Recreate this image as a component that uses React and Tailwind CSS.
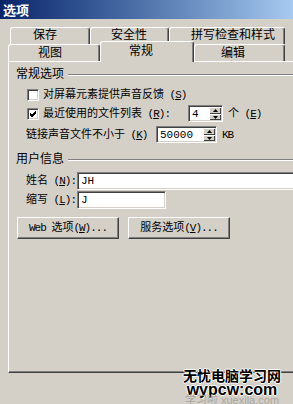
import React from 'react';

const Tab = ({ children, className }) => (
  <div
    className={`flex items-center border-t border-l border-r border-t-white border-l-white border-r-[#404040] rounded-tl-[3px] rounded-tr-[3px] shadow-[inset_-1px_0_0_#808080] bg-[#d4d0c8] ${className}`}
  >
    {children}
  </div>
);

const Header = ({ children, className }) => (
  <div className={`flex items-center h-[12px] pl-[7px] text-[12px] leading-[12px] ${className}`}>
    <span>{children}</span>
    <div className="flex-1 ml-[4px] h-[2px] border-t border-t-[#808080] border-b border-b-white" />
  </div>
);

// latin bits are narrower in the original (bitmap font), tighten them
const Lat = ({ children }) => <span className="tracking-[-1px]">{children}</span>;

const Checkbox = ({ checked }) => (
  <div className="w-[12px] h-[12px] shrink-0 bg-white border border-t-[#808080] border-l-[#808080] border-r-white border-b-white shadow-[inset_1px_1px_0_#404040,inset_-1px_-1px_0_#d4d0c8] flex items-center justify-center">
    {checked && (
      <svg width="8" height="8" viewBox="0 0 8 8">
        <path d="M1 3 L3 5 L7 1 M1 4 L3 6 L7 2 M1 5 L3 7 L7 3" stroke="#000" strokeWidth="1" fill="none" />
      </svg>
    )}
  </div>
);

const Sunken = ({ className, children }) => (
  <div
    className={`h-full bg-white border border-t-[#808080] border-l-[#808080] border-r-white border-b-white shadow-[inset_1px_1px_0_#404040,inset_-1px_-1px_0_#d4d0c8] flex items-center ${className}`}
  >
    {children}
  </div>
);

const Arrow = ({ up }) => (
  <div className="flex-1 flex items-center justify-center bg-[#d4d0c8] border-t border-l border-t-white border-l-white shadow-[inset_-1px_-1px_0_#404040]">
    <svg width="5" height="3" viewBox="0 0 5 3">
      <path d={up ? 'M2.5 0 L5 3 L0 3 Z' : 'M0 0 L5 0 L2.5 3 Z'} fill="#000" />
    </svg>
  </div>
);

const Spin = ({ value, className }) => (
  <Sunken className={`justify-between shrink-0 ${className}`}>
    <span className="pl-[3px]">{value}</span>
    <div className="flex flex-col w-[13px] h-full py-[1px] pr-[1px]">
      <Arrow up />
      <Arrow />
    </div>
  </Sunken>
);

const Button = ({ children }) => (
  <div className="w-[102px] h-[22px] flex items-center justify-center whitespace-nowrap border-t border-l border-r border-b border-t-white border-l-white border-r-[#404040] border-b-[#404040] shadow-[inset_-1px_-1px_0_#808080]">
    <span>{children}</span>
  </div>
);

export default function App() {
  return (
    <div className="relative w-[293px] h-[404px] overflow-hidden bg-[#d4d0c8] text-black text-[11px] leading-[12px] whitespace-nowrap font-['Liberation_Mono','Noto_Sans_CJK_SC',monospace]">
      {/* title bar */}
      <div className="h-[19px] flex items-center pl-[3px] bg-linear-to-r from-[#0a246a] to-[#a6caf0]">
        <span className="text-white font-bold text-[13px] leading-[13px] font-['Noto_Sans_CJK_SC',sans-serif]">选项</span>
      </div>

      {/* tabs */}
      <div className="flex pt-[8px] pl-[10px] text-[12px]">
        <Tab className="w-[80px] h-[17px] pl-[22px]">保存</Tab>
        <Tab className="w-[79px] h-[17px] pl-[20px]">安全性</Tab>
        <Tab className="w-[116px] h-[17px] pl-[21px]">拼写检查和样式</Tab>
      </div>
      <div className="flex items-end h-[17px] pl-[8px] text-[12px] relative z-10">
        <Tab className="w-[92px] h-[17px] pl-[29px] pt-[2px]">视图</Tab>
        <Tab className="w-[94px] h-[21px] -mb-px pl-[28px]">常规</Tab>
        <Tab className="w-[91px] h-[17px] pl-[26px] pt-[2px]">编辑</Tab>
      </div>

      {/* panel */}
      <div className="ml-[8px] w-[300px] h-[312px] border-l border-t border-b border-l-white border-t-white border-b-[#404040] shadow-[inset_0_-1px_0_#808080]">
        <Header className="mt-[7px]">常规选项</Header>

        <div className="flex items-center mt-[5px] h-[17px] pl-[18px]">
          <Checkbox />
          <span className="ml-[4px]">对屏幕元素提供声音反馈<Lat> (<u>S</u>)</Lat></span>
        </div>

        <div className="flex items-center mt-[2px] h-[17px] pl-[18px]">
          <Checkbox checked />
          <span className="ml-[4px] w-[145px] shrink-0">最近使用的文件列表<Lat> (<u>R</u>):</Lat></span>
          <Spin value="4" className="w-[35px]" />
          <span className="ml-[5px]">个<Lat> (<u>E</u>)</Lat></span>
        </div>

        <div className="flex items-center mt-[4px] h-[17px] pl-[17px]">
          <span className="w-[130px] shrink-0">链接声音文件不小于<Lat> (<u>K</u>)</Lat></span>
          <Spin value="50000" className="w-[61px]" />
          <span className="ml-[5px]"><Lat>KB</Lat></span>
        </div>

        <Header className="mt-[11px]">用户信息</Header>

        <div className="flex items-center mt-[6px] h-[18px] pl-[17px]">
          <span className="w-[51px] shrink-0">姓名<Lat> (<u>N</u>):</Lat></span>
          <Sunken className="flex-1">
            <span className="pl-[3px]">JH</span>
          </Sunken>
        </div>

        <div className="flex items-center mt-[1px] h-[18px] pl-[17px]">
          <span className="w-[51px] shrink-0">缩写<Lat> (<u>L</u>):</Lat></span>
          <Sunken className="w-[89px]">
            <span className="pl-[3px]">J</span>
          </Sunken>
        </div>

        <div className="flex gap-[9px] mt-[8px] pl-[8px]">
          <Button><Lat>Web </Lat>选项<Lat>(<u>W</u>)...</Lat></Button>
          <Button>服务选项<Lat>(<u>V</u>)...</Lat></Button>
        </div>
      </div>

      {/* watermark */}
      <div className="absolute left-[180px] top-[368px] w-[104px] flex flex-col items-center">
        <span className="text-[14px] leading-[15px] font-bold font-['Noto_Sans_CJK_SC',sans-serif] [text-shadow:1px_0_0_#fff,-1px_0_0_#fff,0_1px_0_#fff,0_-1px_0_#fff]">
          无忧电脑学习网
        </span>
        <span className="text-[16px] leading-[14px] font-bold font-['Liberation_Sans',sans-serif] [text-shadow:1px_0_0_#fff,-1px_0_0_#fff,0_1px_0_#fff,0_-1px_0_#fff]">
          wypcw:com
        </span>
        <span className="-mt-[2px] text-[11px] leading-[10px] text-[#aaa69e] font-['Liberation_Sans','Noto_Sans_CJK_SC',sans-serif]">
          学习啦 xuexila.com
        </span>
      </div>
    </div>
  );
}
